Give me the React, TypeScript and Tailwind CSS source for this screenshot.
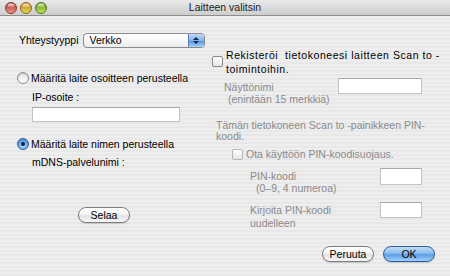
import type { ReactNode } from "react";

const font = "font-['Liberation_Sans',Arial,sans-serif] text-[10.5px]";

function Light({ id, top, bottom, ring }: { id: string; top: string; bottom: string; ring: string }) {
  return (
    <svg width="12" height="12" viewBox="0 0 12 12">
      <defs>
        <linearGradient id={`${id}-g`} x1="0" y1="0" x2="0" y2="1">
          <stop offset="0" stopColor={top} />
          <stop offset="1" stopColor={bottom} />
        </linearGradient>
        <linearGradient id={`${id}-h`} x1="0" y1="0" x2="0" y2="1">
          <stop offset="0" stopColor="#ffffff" stopOpacity="0.85" />
          <stop offset="1" stopColor="#ffffff" stopOpacity="0.1" />
        </linearGradient>
      </defs>
      <circle cx="6" cy="6" r="5.5" fill={`url(#${id}-g)`} stroke={ring} strokeWidth="1" />
      <ellipse cx="6" cy="3.6" rx="3.4" ry="2" fill={`url(#${id}-h)`} />
    </svg>
  );
}

function TitleBar() {
  return (
    <div className="relative flex h-[16px] items-center border-b border-[#8e8e8e] bg-linear-to-b from-[#e9e9e9] to-[#cdcdcd]">
      <div className="ml-[5px] flex gap-[3px]">
        <Light id="r" top="#a8322c" bottom="#f49a8e" ring="#8a3a35" />
        <Light id="y" top="#c97a12" bottom="#d8e05a" ring="#8f6a22" />
        <Light id="g" top="#5b8e16" bottom="#c9e860" ring="#4f7a20" />
      </div>
      <div className="absolute inset-x-0 top-0 flex h-[15px] items-center justify-center text-[#222]">
        Laitteen valitsin
      </div>
    </div>
  );
}

function Radio({ checked }: { checked?: boolean }) {
  if (checked) {
    return (
      <span className="flex h-[12px] w-[12px] items-center justify-center rounded-full border border-[#2f5f9e] bg-[radial-gradient(circle_at_50%_70%,#b7dcff_0%,#5d9de3_60%,#3d7ccc_100%)]">
        <span className="h-[4px] w-[4px] rounded-full bg-[#10243f]" />
      </span>
    );
  }
  return (
    <span className="h-[12px] w-[12px] rounded-full border border-[#8c8c8c] bg-linear-to-b from-[#e2e2e2] to-white shadow-[inset_0_1px_1px_rgba(0,0,0,0.15)]" />
  );
}

function Check({ disabled }: { disabled?: boolean }) {
  return (
    <span
      className={`block h-[11px] w-[11px] shrink-0 rounded-[2px] border bg-linear-to-b from-white to-[#e6e6e6] ${
        disabled ? "border-[#b5b5b5]" : "border-[#8a8a8a]"
      }`}
    />
  );
}

function Field({ className }: { className: string }) {
  return <div className={`border border-[#c3c3c3] border-t-[#a8a8a8] bg-white ${className}`} />;
}

function AquaButton({ children, width, primary }: { children: ReactNode; width: string; primary?: boolean }) {
  return (
    <div
      className={`flex h-[16px] items-center justify-center rounded-full border text-black ${width} ${
        primary
          ? "border-[#2d5c9e] bg-[linear-gradient(180deg,#c2ddf8_0%,#8bbcef_45%,#5f9de6_55%,#9fd0fb_100%)]"
          : "border-[#7c7c7c] bg-[linear-gradient(180deg,#ffffff_0%,#f4f4f4_45%,#e2e2e2_55%,#f7f7f7_100%)]"
      } shadow-[0_1px_1px_rgba(0,0,0,0.15)]`}
    >
      {children}
    </div>
  );
}

export default function App() {
  return (
    <div className={`flex h-[276px] w-[450px] flex-col overflow-hidden ${font}`}>
      <TitleBar />
      <div className="flex flex-1 bg-[image:repeating-linear-gradient(180deg,#eeeeee_0px,#eeeeee_2px,#e8e8e8_2px,#e8e8e8_4px)] leading-[13px] text-black">
        {/* left column */}
        <div className="flex w-[205px] flex-col pl-[17px]">
          <div className="mt-[17px] flex h-[15px] items-center">
            <span className="ml-[2px]">Yhteystyyppi</span>
            <div className="ml-[4px] flex h-[15px] w-[122px] overflow-hidden rounded-[4px] border border-[#8a8a8a] bg-linear-to-b from-white to-[#ededed]">
              <span className="flex flex-1 items-center pl-[6px]">Verkko</span>
              <span className="flex w-[16px] flex-col items-center justify-center gap-[1px] border-l border-[#5b7fb0] bg-[linear-gradient(180deg,#c0dcf8_0%,#7fb2ee_50%,#5897e3_55%,#a6d1fa_100%)]">
                <svg width="6" height="3" viewBox="0 0 6 3">
                  <path d="M0 3 L3 0 L6 3 Z" fill="#1a2a44" />
                </svg>
                <svg width="6" height="3" viewBox="0 0 6 3">
                  <path d="M0 0 L3 3 L6 0 Z" fill="#1a2a44" />
                </svg>
              </span>
            </div>
          </div>

          <div className="mt-[24px] flex h-[12px] items-center gap-[2px]">
            <Radio />
            <span>Määritä laite osoitteen perusteella</span>
          </div>
          <div className="mt-[7px] ml-[15px]">IP-osoite :</div>
          <Field className="mt-[3px] ml-[15px] h-[15px] w-[148px] border-[#a9a9a9]" />

          <div className="mt-[16px] flex h-[12px] items-center gap-[2px]">
            <Radio checked />
            <span>Määritä laite nimen perusteella</span>
          </div>
          <div className="mt-[6px] ml-[15px]">mDNS-palvelunimi :</div>

          <div className="mt-[38px] ml-[61px]">
            <AquaButton width="w-[52px]">Selaa</AquaButton>
          </div>
        </div>

        {/* right column */}
        <div className="flex flex-1 flex-col text-[#8a8a8a]">
          <div className="mt-[32px] flex">
            <div className="mt-[8px] ml-[7px] flex">
              <Check />
            </div>
            <div className="ml-[3px] leading-[14px] tracking-[0.55px] text-black">
              Rekisteröi&nbsp; tietokoneesi laitteen Scan to -
              <br />
              toimintoihin.
            </div>
          </div>

          <div className="mt-[5px] flex items-start">
            <div className="ml-[19px] w-[114px] leading-[12px]">
              Näyttönimi
              <br />
              <span className="ml-[4px]">(enintään 15 merkkiä)</span>
            </div>
            <Field className="mt-[-3px] h-[16px] w-[84px]" />
          </div>

          <div className="mt-[15px] ml-[11px] leading-[11px]">
            Tämän tietokoneen Scan to -painikkeen PIN-
            <br />
            koodi.
          </div>

          <div className="mt-[6px] ml-[27px] flex items-center gap-[3px]">
            <Check disabled />
            <span>Ota käyttöön PIN-koodisuojaus.</span>
          </div>

          <div className="mt-[9px] flex items-start">
            <div className="ml-[45px] w-[130px] leading-[12px]">
              PIN-koodi
              <br />
              <span className="ml-[6px]">(0–9, 4 numeroa)</span>
            </div>
            <Field className="mt-[-2px] h-[17px] w-[42px]" />
          </div>

          <div className="mt-[10px] flex items-start">
            <div className="ml-[45px] w-[130px] leading-[13px]">
              Kirjoita PIN-koodi
              <br />
              uudelleen
            </div>
            <Field className="mt-[-2px] h-[16px] w-[42px]" />
          </div>

          <div className="mt-[16px] ml-[117px] flex gap-[9px]">
            <AquaButton width="w-[52px]">Peruuta</AquaButton>
            <AquaButton width="w-[52px]" primary>
              OK
            </AquaButton>
          </div>
        </div>
      </div>
    </div>
  );
}
